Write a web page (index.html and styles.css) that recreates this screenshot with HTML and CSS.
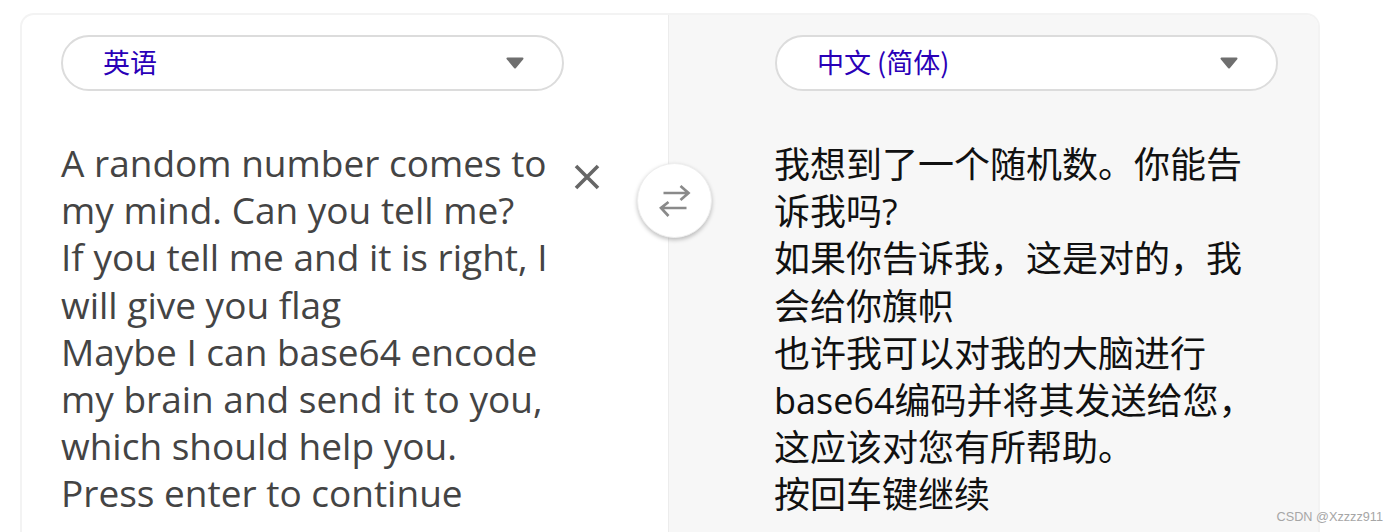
FILE: index.html
```html
<!doctype html>
<html>
  <head>
    <meta http-equiv="Content-Type" content="text/html; charset=Utf-8">
    <title>翻译</title>
    <link rel="stylesheet" href="styles.css">
  </head>
  <body>
    <div class="translator">
      <div class="pane source">
        <div class="lang-select">
          <span class="lang-name">英语</span>
          <svg class="caret" width="18" height="12" viewBox="0 0 18 12">
            <path d="M1.5 1.5 H16.5 L9 10.5 Z" fill="#6f6f6f" stroke="#6f6f6f" stroke-width="2" stroke-linejoin="round"/>
          </svg>
        </div>
        <div class="text-row">
          <div class="text">A random number comes to<br>my mind. Can you tell me?<br>If you tell me and it is right, I<br>will give you flag<br>Maybe I can base64 encode<br>my brain and send it to you,<br>which should help you.<br>Press enter to continue</div>
          <svg class="clear" width="26" height="26" viewBox="0 0 26 26">
            <path d="M2 2 L24 24 M24 2 L2 24" stroke="#666" stroke-width="3.6" fill="none"/>
          </svg>
        </div>
      </div>
      <div class="pane target">
        <div class="lang-select">
          <span class="lang-name">中文 (简体)</span>
          <svg class="caret" width="18" height="12" viewBox="0 0 18 12">
            <path d="M1.5 1.5 H16.5 L9 10.5 Z" fill="#6f6f6f" stroke="#6f6f6f" stroke-width="2" stroke-linejoin="round"/>
          </svg>
        </div>
        <div class="text-row">
          <div class="text">我想到了一个随机数。你能告<br>诉我吗?<br>如果你告诉我，这是对的，我<br>会给你旗帜<br>也许我可以对我的大脑进行<br>base64编码并将其发送给您，<br>这应该对您有所帮助。<br>按回车键继续</div>
        </div>
      </div>
      <button class="swap">
        <svg width="32" height="34" viewBox="0 0 32 34">
          <path d="M4.5 9 H29 M21.5 2 L29.5 9 L21.5 16 M27.5 24 H2 M9.5 18 L2 24 L9.5 32" stroke="#8a8a8a" stroke-width="2.7" fill="none"/>
        </svg>
      </button>
    </div>
    <div class="watermark">CSDN @Xzzzz911</div>
  </body>
</html>
```

FILE: styles.css
```css
html, body {
  margin: 0;
  height: 100%;
  overflow: hidden;
  background: #fff;
}
body {
  padding: 13px 0 0 20px;
  box-sizing: border-box;
  font-family: "Open Sans", "Noto Sans CJK SC", sans-serif;
}
.translator {
  position: relative;
  display: flex;
  width: 1300px;
  height: 519px;
  box-sizing: border-box;
  border: 2px solid #f3f3f3;
  border-bottom: 0;
  border-radius: 14px 14px 0 0;
}
.pane {
  box-sizing: border-box;
  padding-top: 20px;
}
.source {
  width: 647px;
  padding-left: 39px;
  border-right: 1px solid #ececec;
}
.target {
  flex: 1;
  padding-left: 106px;
  background: #f7f7f7;
  border-radius: 0 12px 0 0;
}
.lang-select {
  display: flex;
  align-items: center;
  justify-content: space-between;
  width: 503px;
  height: 56px;
  box-sizing: border-box;
  padding: 0 38px 0 40px;
  background: #fff;
  border: 2px solid #dcdcdc;
  border-radius: 28px;
}
.lang-name {
  margin-bottom: 2px;
  font-family: "Noto Sans CJK SC", sans-serif;
  font-size: 27px;
  line-height: 36px;
  color: #2a00b8;
}
.text-row {
  display: flex;
  margin-top: 50px;
}
.text {
  font-size: 36px;
  line-height: 47.2px;
  white-space: nowrap;
}
.source .text {
  width: 513px;
  margin-top: -2px;
  font-size: 37px;
  color: #444;
}
.target .text {
  margin-left: -1px;
  color: #111;
}
.clear {
  margin-top: 23px;
}
.swap {
  position: absolute;
  left: 615px;
  top: 148px;
  width: 75px;
  height: 75px;
  padding: 0;
  display: flex;
  align-items: center;
  justify-content: center;
  background: #fff;
  border: 1px solid #eee;
  border-radius: 50%;
  box-shadow: 0 2px 4px rgba(0, 0, 0, 0.25);
}
.watermark {
  position: absolute;
  right: 15px;
  bottom: 8px;
  font-family: "Liberation Sans", sans-serif;
  font-size: 12.7px;
  color: #a6a6a6;
}
```
